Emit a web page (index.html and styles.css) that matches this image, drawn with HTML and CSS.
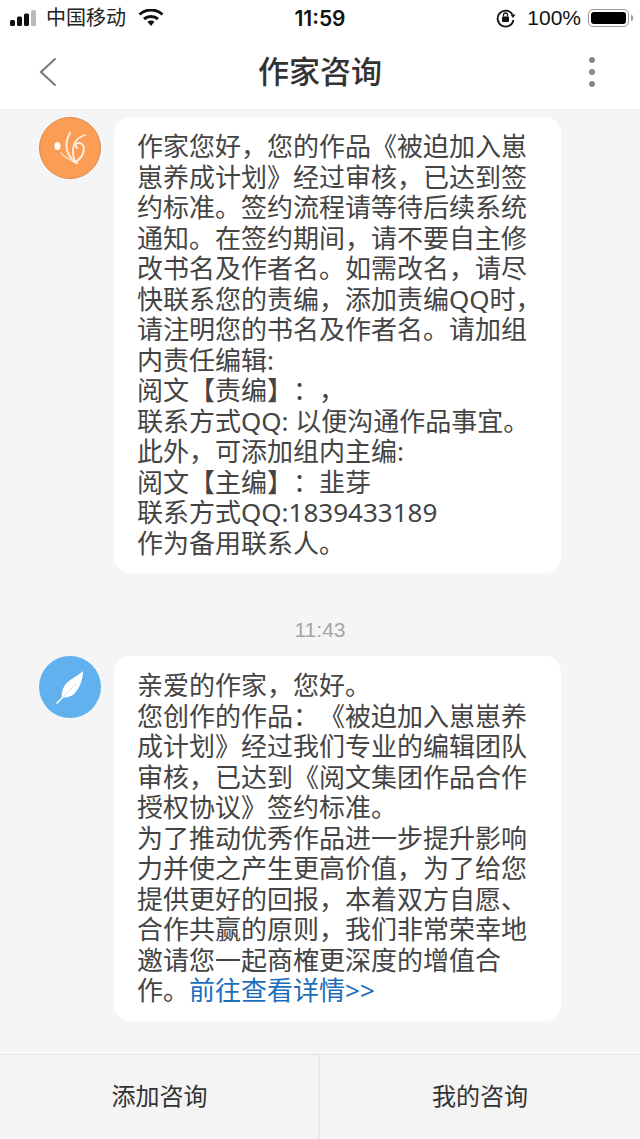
FILE: index.html
```html
<!DOCTYPE html>
<html lang="zh">
<head>
<meta charset="utf-8">
<title>作家咨询</title>
<link rel="stylesheet" href="styles.css">
</head>
<body>
<div class="page">
  <header class="top">
    <div class="status">
      <div class="status-left">
        <svg class="signal" width="28" height="16" viewBox="0 0 28 16"><rect x="0" y="10" width="5" height="6" rx="1.500" fill="#111"/><rect x="7" y="6.500" width="5" height="9.500" rx="1.500" fill="#111"/><rect x="14" y="3.500" width="5" height="12.500" rx="1.500" fill="#111"/><rect x="21" y="0" width="5" height="16" rx="1.500" fill="#bbb"/></svg>
        <span class="carrier">中国移动</span>
        <svg class="wifi" width="26" height="18" viewBox="0 0 26 18"><path d="M1.500 5.500C8 -0.500 18 -0.500 24.500 5.500" fill="none" stroke="#111" stroke-width="3"/><path d="M6 10C10 6.500 16 6.500 20 10" fill="none" stroke="#111" stroke-width="3"/><path d="M9.500 12.800C11.500 11.200 14.500 11.200 16.500 12.800L13 17Z" fill="#111"/></svg>
      </div>
      <div class="clock">11:59</div>
      <div class="status-right">
        <svg class="lock" width="20" height="20" viewBox="0 0 20 20"><path d="M16.500 6.500A8 8 0 1 0 17.500 12" fill="none" stroke="#111" stroke-width="1.800"/><path d="M14.500 6.500h5l-2.500 3.500z" fill="#111"/><rect x="6" y="8.500" width="7" height="5.500" rx="1" fill="#111"/><path d="M7.500 8.500V7a2 2 0 0 1 4 0v1.500" fill="none" stroke="#111" stroke-width="1.300"/></svg>
        <span class="battery-pct">100%</span>
        <div class="battery"><div class="battery-fill"></div></div>
        <div class="battery-tip"></div>
      </div>
    </div>
    <nav class="nav">
      <svg class="back" width="18" height="30" viewBox="0 0 18 30"><path d="M16.500 1.500L2 15L16.500 28.500" fill="none" stroke="#777" stroke-width="2"/></svg>
      <h1 class="title">作家咨询</h1>
      <div class="more"><i></i><i></i><i></i></div>
    </nav>
  </header>

  <main class="list">
    <section class="msg msg-first">
      <div class="avatar avatar-orange">
        <svg width="62" height="62" viewBox="0 0 62 62"><g fill="none" stroke="#fff" stroke-linecap="round"><path d="M38 46C28 40 24 28 31 16" stroke-width="2.200" opacity=".75"/><path d="M36 44C32 34 33 22 46 18" stroke-width="1.800" opacity=".85"/><path d="M38 44C46 38 47 28 41 26C37 25 35 29 38 31" stroke-width="1.800" opacity=".9"/><path d="M37 46C30 42 25 40 22 36" stroke-width="1.500" opacity=".6"/></g><ellipse cx="18.500" cy="29" rx="3" ry="4" fill="#fff"/></svg>
      </div>
      <div class="bubble">作家您好，您的作品《被迫加入崽<br>崽养成计划》经过审核，已达到签<br>约标准。签约流程请等待后续系统<br>通知。在签约期间，请不要自主修<br>改书名及作者名。如需改名，请尽<br>快联系您的责编，添加责编QQ时，<br>请注明您的书名及作者名。请加组<br>内责任编辑:<br>阅文【责编】：，<br>联系方式QQ: 以便沟通作品事宜。<br>此外，可添加组内主编:<br>阅文【主编】：韭芽<br>联系方式QQ:1839433189<br>作为备用联系人。</div>
    </section>
    <div class="time">11:43</div>
    <section class="msg">
      <div class="avatar avatar-blue">
        <svg width="62" height="62" viewBox="0 0 62 62"><path d="M44 15C44 23 41 32 35 38C31 41 27 42 23 41C22 35 25 29 30 25C35 21 40 19 44 15Z" fill="#fff"/><path d="M18 47L36 29" stroke="#fff" stroke-width="1.600" stroke-linecap="round"/><path d="M25 40L37 28" stroke="#cfe6f9" stroke-width="1" stroke-linecap="round"/></svg>
      </div>
      <div class="bubble">亲爱的作家，您好。<br>您创作的作品：《被迫加入崽崽养<br>成计划》经过我们专业的编辑团队<br>审核，已达到《阅文集团作品合作<br>授权协议》签约标准。<br>为了推动优秀作品进一步提升影响<br>力并使之产生更高价值，为了给您<br>提供更好的回报，本着双方自愿、<br>合作共赢的原则，我们非常荣幸地<br>邀请您一起商榷更深度的增值合<br>作。<a class="link" href="#">前往查看详情&gt;&gt;</a></div>
    </section>
  </main>

  <footer class="actions">
    <div class="action">添加咨询</div>
    <div class="action">我的咨询</div>
  </footer>
</div>
</body>
</html>
```
FILE: styles.css
```css
* { box-sizing: border-box; }
html, body { margin: 0; padding: 0; }
body {
  font-family: "Noto Sans", "Noto Sans CJK SC", sans-serif;
  background: #f5f5f5;
  color: #333;
  text-spacing-trim: space-all;
}
.page {
  width: 640px;
  height: 1139px;
  display: flex;
  flex-direction: column;
  overflow: hidden;
}
.top {
  height: 110px;
  flex: none;
  background: #fff;
  border-bottom: 1px solid #eeeeee;
}
.status {
  height: 36px;
  display: grid;
  grid-template-columns: 1fr auto 1fr;
  align-items: center;
  color: #111;
}
.status-left { display: flex; align-items: center; padding-left: 10px; }
.signal { display: block; }
.carrier { font-size: 20px; line-height: 36px; margin-left: 8px; color: #222; }
.wifi { margin-left: 12px; }
.clock {
  font-family: "Inter", sans-serif;
  font-size: 21px;
  font-weight: 600;
  text-align: center;
}
.status-right { display: flex; align-items: center; justify-content: flex-end; padding-right: 7px; }
.battery-pct {
  font-family: "Liberation Sans", sans-serif;
  font-size: 21px;
  margin-left: 11px;
}
.battery {
  width: 41px;
  height: 18px;
  margin-left: 7px;
  padding: 2px;
  border: 1px solid #999;
  border-radius: 5px;
}
.battery-fill { width: 100%; height: 100%; background: #000; border-radius: 3px; }
.battery-tip { width: 2px; height: 6px; margin-left: 2px; background: #999; border-radius: 0 2px 2px 0; }
.nav {
  height: 73px;
  display: grid;
  grid-template-columns: 1fr auto 1fr;
  align-items: center;
  padding: 0 39px 2px;
}
.title {
  margin: 0 0 3px;
  font-family: "Noto Sans CJK SC", sans-serif;
  font-size: 31px;
  line-height: 40px;
  font-weight: 500;
  color: #333;
}
.more { display: flex; flex-direction: column; gap: 6px; justify-self: end; margin-right: 6px; }
.more i { display: block; width: 6px; height: 6px; border-radius: 50%; background: #888; }
.list {
  flex: 1;
  padding: 7px 0 0 39px;
  background: #f5f5f5;
}
.msg { display: flex; align-items: flex-start; gap: 13px; }
.avatar { width: 62px; height: 62px; border-radius: 50%; flex: none; overflow: hidden; }
.avatar svg { display: block; }
.avatar-orange { background: #fb9d54; border: 1px solid #e08b4b; }
.avatar-orange svg { margin: -1px; }
.avatar-blue { background: #62b1ef; }
.bubble {
  width: 447px;
  background: #fff;
  border-radius: 16px;
  padding: 14px 23px 15px;
  font-size: 26px;
  line-height: 30.5px;
  color: #444;
  white-space: nowrap;
}
.link { color: #1c6ebd; text-decoration: none; }
.time {
  margin: 42px 0 11px;
  padding-right: 39px;
  text-align: center;
  font-family: "Liberation Sans", sans-serif;
  font-size: 21px;
  line-height: 30px;
  color: #a5a5a5;
}
.actions {
  flex: none;
  height: 85px;
  display: grid;
  grid-template-columns: 319px 1fr;
  background: #f4f4f4;
  border-top: 1px solid #e6e6e6;
}
.action {
  display: flex;
  align-items: center;
  justify-content: center;
  padding-bottom: 6px;
  font-size: 24px;
  color: #333;
}
.action + .action { border-left: 1px solid #e6e6e6; }
```
